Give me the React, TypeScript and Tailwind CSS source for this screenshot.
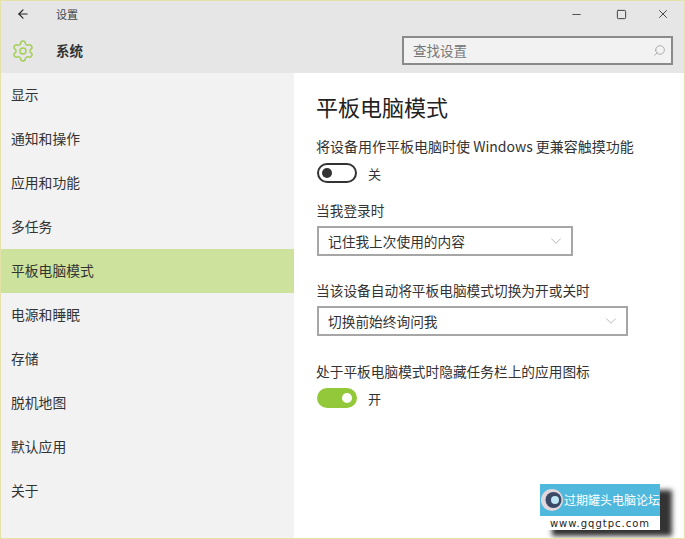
import { ArrowLeft, ChevronDown, Minus, Search, Settings, Square, X } from "lucide-react";

const navItems = ["显示", "通知和操作", "应用和功能", "多任务", "平板电脑模式", "电源和睡眠", "存储", "脱机地图", "默认应用", "关于"];

function Toggle({ on }: { on: boolean }) {
  if (on) {
    return (
      <div className="ml-px flex h-[20px] w-[40px] items-center justify-end rounded-full bg-[#93c83a] pr-[5px]">
        <div className="h-[10px] w-[10px] rounded-full bg-white" />
      </div>
    );
  }
  return (
    <div className="ml-px flex h-[20px] w-[40px] items-center rounded-full border-2 border-[#333333] pl-[3px]">
      <div className="h-[10px] w-[10px] rounded-full bg-[#333333]" />
    </div>
  );
}

function SelectBox({ value, width }: { value: string; width: string }) {
  return (
    <div className={`ml-px flex h-[30px] items-center justify-between border-2 border-[#a6a6a6] bg-white pl-[9px] pr-[6px] text-[13.7px] text-[#333333] ${width}`}>
      <span>{value}</span>
      <ChevronDown className="h-[18px] w-[18px] text-[#a0a0a0]" strokeWidth={1} />
    </div>
  );
}

export default function App() {
  return (
    <div className="relative flex h-[539px] w-[685px] flex-col overflow-hidden border border-[#e4e2a8] bg-white font-['Noto_Sans_CJK_SC','Liberation_Sans',sans-serif] text-[#222222]">
      <header className="h-[72px] shrink-0 bg-[#e6e6e6]">
        <div className="flex h-[26px] items-center">
          <ArrowLeft className="ml-[15px] h-[14px] w-[14px] text-[#222222]" strokeWidth={2} />
          <span className="ml-[26px] text-[11px] leading-none text-[#444444]">设置</span>
          <div className="ml-auto flex items-center">
            <Minus className="mr-[33px] h-[13px] w-[13px] text-[#555555]" strokeWidth={2} />
            <Square className="mr-[29px] h-[11px] w-[11px] text-[#333333]" strokeWidth={2} />
            <X className="mr-[14px] h-[14px] w-[14px] text-[#333333]" strokeWidth={1.5} />
          </div>
        </div>
        <div className="flex items-center pt-[9px]">
          <Settings className="ml-[10px] h-[24px] w-[24px] text-[#a4cf59]" strokeWidth={1.5} />
          <span className="ml-[21px] text-[13.5px] font-bold leading-none text-[#333333]">系统</span>
          <div className="ml-auto mr-[11px] flex h-[29px] w-[271px] items-center justify-between border-2 border-[#8a8a8a] bg-[#f2f2f2] pl-[9px] pr-[5px]">
            <span className="text-[13.5px] text-[#777777]">查找设置</span>
            <Search className="h-[13px] w-[13px] -scale-x-100 text-[#a0a0a0]" strokeWidth={1.5} />
          </div>
        </div>
      </header>

      <div className="flex min-h-0 flex-1">
        <nav className="w-[293px] shrink-0 bg-[#f2f2f2]">
          {navItems.map((item) => (
            <div
              key={item}
              className={`flex h-[44px] items-center pb-[2px] pl-[10px] text-[13.8px] text-[#333333] ${item === "平板电脑模式" ? "bg-[#cde29c]" : ""}`}
            >
              {item}
            </div>
          ))}
        </nav>

        <main className="flex-1 pl-[22px]">
          <h1 className="mt-[17px] text-[22px] font-normal leading-[32px] text-[#222222]">平板电脑模式</h1>
          <p className="mt-[14px] text-[14px] leading-[20px] text-[#333333]">将设备用作平板电脑时使 Windows 更兼容触摸功能</p>
          <div className="mt-[7px] flex items-center gap-[11px]">
            <Toggle on={false} />
            <span className="text-[13px] leading-none text-[#333333]">关</span>
          </div>
          <p className="mt-[17px] text-[13.7px] leading-[20px] text-[#333333]">当我登录时</p>
          <div className="mt-[6px]">
            <SelectBox value="记住我上次使用的内容" width="w-[256px]" />
          </div>
          <p className="mt-[24px] text-[13.7px] leading-[20px] text-[#333333]">当该设备自动将平板电脑模式切换为开或关时</p>
          <div className="mt-[6px]">
            <SelectBox value="切换前始终询问我" width="w-[311px]" />
          </div>
          <p className="mt-[25px] text-[13.7px] leading-[20px] text-[#333333]">处于平板电脑模式时隐藏任务栏上的应用图标</p>
          <div className="mt-[7px] flex items-center gap-[11px]">
            <Toggle on />
            <span className="text-[13px] leading-none text-[#333333]">开</span>
          </div>
        </main>
      </div>

      {/* forum watermark */}
      <div className="absolute left-[539px] top-[483px] w-[120px] shadow-[12px_6px_5px_#333333]">
        <div className="flex h-[32px] items-center bg-[#4fb8dc]">
          <svg viewBox="0 0 24 24" className="h-[24px] w-[24px] shrink-0">
            <circle cx="12" cy="12" r="11" fill="#e3d5dc" />
            <circle cx="13.5" cy="12" r="8" fill="#3a4a66" />
            <circle cx="15" cy="12" r="4" fill="#bfe6f2" />
          </svg>
          <span className="whitespace-nowrap text-[12px] leading-none text-white">过期罐头电脑论坛</span>
        </div>
        <div className="flex h-[14px] items-center justify-center bg-white font-['DejaVu_Sans',sans-serif] text-[10px] tracking-[1px] text-[#222222]">
          www.gqgtpc.com
        </div>
      </div>
    </div>
  );
}
